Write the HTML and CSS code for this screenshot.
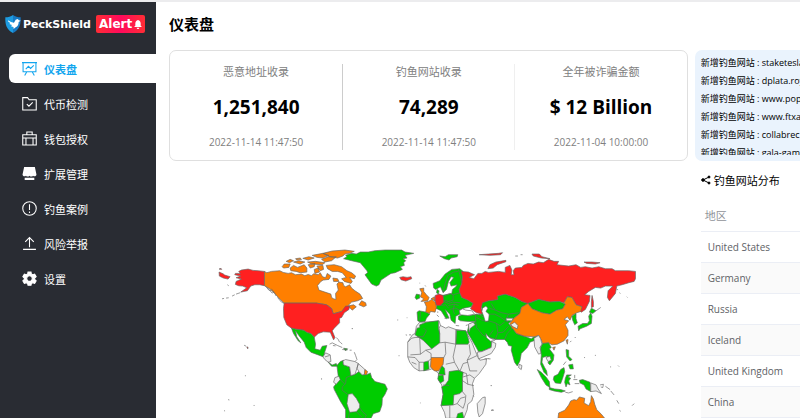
FILE: index.html
```html
<!DOCTYPE html>
<html lang="zh-CN">
<head>
    <meta charset="UTF-8">
    <meta name="viewport" content="width=device-width, initial-scale=1.0">
    <title>PeckShield Alert</title>
    <link rel="stylesheet" href="styles.css">
</head>
<body>
    <div class="app">
        <aside class="sidebar">
            <div class="logo">
                <svg class="logo-shield" viewBox="0 0 48 54">
                    <path fill="#1d9be0" d="M24 0C18 5 9 7 1 7c-1 22 4 38 23 47z"/>
                    <path fill="#1779c4" d="M24 0c6 5 15 7 23 7 1 22-4 38-23 47z"/>
                    <path fill="#fff" d="M9 16l9 5 9 2 5-9 6-2 4 4 5 1-6 4c0 8-3 13-9 16l-6 5-1-6-7-2 3-4-8-3 3-3-6-4z"/>
                </svg>
                <span class="logo-name">PeckShield</span>
                <span class="logo-badge">Alert
                    <svg viewBox="0 0 24 27"><path fill="#fff" d="M12 0c5 1 8 5 8 10v7l4 4H0l4-4v-7c0-5 3-9 8-10zM8 23h8c0 5-8 5-8 0z"/></svg>
                </span>
            </div>
            <nav class="menu">
                <a href="#" class="menu-item active">
                    <svg viewBox="0 0 14 14"><path d="M0 1.500h14M1 1.500v8.500h12V1.500M4.500 10l-2 3.500M9.500 10l2 3.500M3.500 7.500l2.500-2.500 2 2 3-3"/></svg>
                    仪表盘
                </a>
                <a href="#" class="menu-item">
                    <svg viewBox="0 0 14 14"><path d="M.7 1.500h4.500l1.500 2h6.600v9.500H.7zM4.500 7.500l2 2 3.500-3.500"/></svg>
                    代币检测
                </a>
                <a href="#" class="menu-item">
                    <svg viewBox="0 0 14 14"><path d="M.7 3.500h12.600v9.500H.7zM4.500 3.500v-2.500h5v2.500M.7 6.500h12.600M3.700 6.500v6M10.300 6.500v6"/></svg>
                    钱包授权
                </a>
                <a href="#" class="menu-item">
                    <svg viewBox="0 0 14 14"><path class="solid" d="M2 1h10l1.500 7c0 2-2.500 2-3.200 1-.8 1.200-2.500 1.200-3.300 0-.8 1.200-2.500 1.200-3.300 0-.7 1-3.200 1-3.200-1zM2.500 11h9v2h-9z"/></svg>
                    扩展管理
                </a>
                <a href="#" class="menu-item">
                    <svg viewBox="0 0 14 14"><circle cx="7" cy="7" r="6.300"/><path d="M7 3v5.500M7 9.800v1.400"/></svg>
                    钓鱼案例
                </a>
                <a href="#" class="menu-item">
                    <svg viewBox="0 0 14 14"><path d="M1 12.500h12M7 10.500V1.500M3 5.500l4-4 4 4"/></svg>
                    风险举报
                </a>
                <a href="#" class="menu-item">
                    <svg viewBox="0 0 14 14"><path class="gear" d="M5.300 2.800L5.600.9h2.800l.3 1.900 1.300.7 1.800-.6 1.400 2.400-1.400 1.300v1.300l1.400 1.300-1.400 2.400-1.800-.6-1.300.7-.3 1.500H5.600l-.3-1.500-1.300-.7-1.800.6L.8 9.200l1.400-1.300V6.600L.8 5.300l1.400-2.400 1.800.6zM7 4.500a2.600 2.600 0 1 0 0 5.200 2.600 2.600 0 1 0 0-5.200z"/></svg>
                    设置
                </a>
            </nav>
        </aside>

        <main class="content">
            <h1 class="page-title">仪表盘</h1>
            <div class="board">
                <div class="board-main">
                    <section class="stats">
                        <div class="stat">
                            <div class="stat-label">恶意地址收录</div>
                            <div class="stat-value">1,251,840</div>
                            <div class="stat-time">2022-11-14 11:47:50</div>
                        </div>
                        <div class="stat">
                            <div class="stat-label">钓鱼网站收录</div>
                            <div class="stat-value">74,289</div>
                            <div class="stat-time">2022-11-14 11:47:50</div>
                        </div>
                        <div class="stat">
                            <div class="stat-label">全年被诈骗金额</div>
                            <div class="stat-value">$ 12 Billion</div>
                            <div class="stat-time">2022-11-04 10:00:00</div>
                        </div>
                    </section>

                    <svg class="map" viewBox="0 0 1320 534">
                        <!-- Americas -->
                        <g>
                            <path class="high" d="M169 94L150 92 135 91 120 87 100 90 92 94 97 100 82 100 80 104 98 108 84 113 100 117 84 124 82 133 92 137 104 138 116 143 98 156 118 152 128 138 140 134 155 134 169 137Z"/>
                            <path class="high" d="M33 96L45 101 50 105 66 110 60 117 46 114 34 108ZM33 87l6-2 2 3zM116 320l4 1-1 5z"/>
                            <path class="mid" d="M169 94L176 98 190 94 215 92 225 97 240 100 250 98 262 104 280 102 290 107 300 103 310 107 316 101 330 104 336 98 343 110 352 113 357 100 368 108 362 118 345 120 338 124 328 136 332 150 350 156 368 162 370 172 376 176 383 178 382 160 390 150 386 132 392 126 404 128 406 136 412 140 424 134 430 144 440 152 455 162 463 175 448 182 430 186 418 198 436 194 444 200 432 210 422 200 400 214 375 221 370 205 355 194 325 189 228 189 214 176 200 160 185 146 169 137Z"/>
                            <path class="mid" d="M222 80L228 72 246 72 242 82 226 84ZM246 84L256 76 268 82 288 74 296 84 296 96 276 98 264 94 248 92ZM234 64L246 58 256 62 244 68ZM256 66L272 62 290 66 276 72ZM262 56L276 54 280 58 266 60ZM284 55L302 50 318 54 300 60ZM300 74L320 70 318 80 306 84ZM318 88L330 84 334 96 320 100ZM298 66L322 64 350 68 342 74 310 72ZM312 46L344 40 362 46 344 54 326 52ZM340 58L360 50 384 50 370 62 350 66ZM344 40L372 33 410 30 438 34 424 40 410 42 404 48 388 54 364 50ZM326 78L344 76 346 88 336 92ZM354 76L378 74 400 80 416 92 430 98 442 108 438 116 424 112 432 124 428 130 408 124 400 116 414 112 402 98 388 94 372 94 358 86ZM374 114L388 116 392 124 376 124ZM452 194L460 182 472 188 474 196 466 200Z"/>
                            <path class="coast" d="M42 176l6-1M54 174l8-1M72 168l8-4M84 162l12-4M58 134l4 3M172 138l10 12 8 2M178 143l14 16 6-4M190 146l10 14 4 8M208 172l12 14 8 4M108 315l6 3M112 405v3M340 414v4M432 264v3M138 494v3M60 478l4 1M48 511l3 1"/>
                            <path class="high" d="M228 189L325 189 355 194 370 205 375 221 400 214 412 198 424 198 422 208 408 218 400 232 394 234 394 248 378 264 372 272 380 292 376 299 366 276 345 275 330 280 318 291 308 280 298 278 286 270 262 267 250 264 236 254 227 232 226 205Z"/>
                            <path class="low" d="M250 264L262 267 286 270 298 278 308 280 318 291 322 312 320 326 336 330 342 318 356 316 350 334 346 350 330 344 308 336 294 322 288 306 272 286 262 272 266 290 278 308 270 302 256 280Z"/>
                            <path class="none" d="M344 350L352 338 366 344 368 364 360 366 350 358ZM350 350l14-4"/>
                            <path class="low" d="M360 366L372 374 384 370 388 378 370 378ZM406 324L418 326 412 332Z"/>
                            <path class="coast" d="M364 312l8-4 16 8 14 6M374 316l8 1M402 328l16 1M384 292l6 6 4 8M396 306l6 6M424 330h6M438 336l4 10 4 12-6 6"/>
                            <path class="low" d="M386 376L396 364 406 360 404 372 424 380 428 406 440 402 452 394 462 404 478 402 486 398 490 412 500 424 530 432 537 446 530 462 522 474 521 494 514 514 495 520 488 534 412 534 412 508 396 482 378 448 376 440 384 430 390 408Z"/>
                            <path class="none" d="M404 362L412 358 440 364 450 370 446 384 440 402 428 406 424 380 406 374ZM450 370L470 388 470 402 462 404 452 394 446 384ZM380 412L392 408 396 418 384 432 376 426ZM420 462L432 460 444 474 454 492 454 502 444 514 424 516 416 490Z"/>
                            <path class="mid" d="M470 388L478 394 474 404 468 402Z"/>
                            <path class="line" d="M428 406L414 412 412 430 402 440 402 450 418 462M396 418L410 432M454 502L464 516 474 524 470 534M444 514L460 530M424 516L420 534"/>
                            <path class="low" d="M406 56L416 50 412 46 430 40 444 42 456 36 480 36 500 32 530 30 580 30 590 36 616 40 590 46 596 54 584 56 592 62 586 68 588 76 576 80 582 88 560 98 548 100 536 108 518 120 512 134 504 138 490 132 480 118 470 104 478 98 476 92 466 80 456 68 430 62Z"/>
                        </g>

                        <!-- Europe and Africa -->
                        <g transform="translate(420)">
                            <path class="high" d="M154 112L164 110 176 112 188 110 190 116 172 123 158 119Z"/>
                            <path class="low" d="M274 48L290 50 300 44 328 44 326 50 308 54 302 60 288 56Z"/>
                            <path class="low" d="M256 144L254 130 274 122 290 102 310 88 334 86 344 94 340 130 332 148 334 158 340 172 358 180 374 190 368 200 346 204 334 210 334 222 322 228 320 250 308 240 304 222 290 208 302 234 292 234 278 212 262 204 266 196 262 182 274 168 290 164 310 160 312 148 322 140 326 134 308 138 304 128 316 112 308 110 300 124 294 148 284 158 276 140 262 148Z"/>
                            <path class="low" d="M264 158L266 148 272 152 270 162ZM200 172L204 162 214 164 214 174 204 178ZM206 216L212 212 234 216 244 222 234 234 230 244 216 246 208 242Z"/>
                            <path class="mid" d="M214 146L226 144 226 154 234 164 242 172 238 182 218 184 226 176 216 170 220 158ZM228 186L240 184 250 178 262 188 264 202 260 216 246 214 244 220 232 216 234 200ZM248 176L258 170 260 182Z"/>
                            <path class="high" d="M260 166L272 162 284 166 286 186 276 196 264 196 260 182Z"/>
                            <path class="line" d="M284 156L290 130 298 106 316 96 328 94M330 88L334 104 340 130M286 168L304 160 314 164 314 180 300 184 286 180M286 184L300 190 312 186 334 188M300 196L318 192 330 196M304 208L320 204 334 210M314 164L334 158M318 192L314 210 318 222M276 196L292 194 300 204M216 216L214 242"/>
                            <path class="coast" d="M265 224l6 6M268 214v4M288 234l8 2M322 256l10 1M352 256l6-2M230 136l2 3M214 128v2M172 284l4 1M182 284h6M148 238v3M152 345v3M216 487v2M176 232v2M12 264v2"/>
                            <path class="none" d="M214 246L240 246 272 242 276 256 292 264 300 260 322 268 352 272 356 282 370 306 386 346 394 360 414 356 412 372 392 400 378 414 372 430 376 462 370 482 358 492 356 508 346 534 292 534 288 516 278 496 284 462 280 434 270 420 270 400 262 392 250 386 238 390 212 392 196 382 184 366 178 350 178 306 192 284 200 280 204 258Z"/>
                            <path class="low" d="M214 254L234 246 270 242 270 264 274 282 274 308 250 326 224 300 206 288 200 284 206 264 214 262Z"/>
                            <path class="low" d="M324 270L352 272 356 282 362 306 358 312 322 312ZM226 366L240 362 242 386 226 392ZM280 376L288 384 290 404 270 402 274 390ZM270 406L284 404 286 422 276 428 268 416ZM302 394L330 390 344 396 342 414 342 452 334 460 316 464 314 494 278 496 284 462 280 440 290 434 300 420ZM328 520L342 516 346 534 324 534Z"/>
                            <path class="mid" d="M248 352L286 352 284 372 270 392 258 392 246 380Z"/>
                            <path class="line" d="M178 306L190 294 200 292 214 292 216 342 186 344M216 342L232 330 250 326M274 308L290 306 292 340 286 352M274 282L272 264 276 256M322 268L322 312 290 306M322 312L314 350 318 366 292 372M362 312L366 342 356 360 364 392 386 392M318 366L334 394 344 370 358 366M356 360L386 346M232 330L248 340 248 352M178 350L200 352 212 366 212 392M190 366L204 372M340 420L358 432 376 436M342 396L354 400 358 432M340 452L352 466 350 486M314 494L326 490 336 474 350 470M304 496L304 534M326 490L344 504 350 486M212 366L226 366M206 288L224 290 234 272 226 264M240 362L248 356M284 434L302 436M378 414L364 404 344 410"/>
                            <path class="none" d="M386 490L402 472 410 470 410 490 402 520 392 530 388 516Z"/>
                            <path class="low" d="M330 228L344 222 362 226 386 222 392 238 386 244 360 244 336 242 330 238Z"/>
                            <path class="low" d="M362 252L378 246 384 240 392 246 402 274 420 282 430 294 428 322 400 334 390 334 380 316 366 292 356 276Z"/>
                            <path class="none" d="M360 252L374 246 380 254 366 264 362 276ZM430 304L442 310 440 322 428 340 390 356 386 336 400 334 428 322Z"/>
                            <path class="coast" d="M374 466l2 3M428 510l6-2M426 436h3M408 356l14-1"/>
                        </g>

                        <!-- Asia and Oceania -->
                        <g transform="translate(840)">
                            <path class="low" d="M-40 224L-22 222 -20 206 -22 188 0 182 28 178 26 168 50 162 80 172 100 184 118 190 98 202 94 220 74 236 60 250 70 262 84 280 108 288 128 296 136 290 146 290 140 300 124 306 116 322 98 340 94 362 86 377 78 366 68 330 70 318 60 316 56 306 48 298 20 298 0 290 -16 286 -36 262 -38 246Z"/>
                            <path class="high" d="M-82 94L-60 96 -42 104 -58 112 -44 116 -32 100 -20 100 -10 94 0 97 30 94 50 97 50 82 64 76 70 90 68 104 76 104 74 92 80 84 100 82 104 76 118 70 134 72 150 66 164 68 180 58 196 64 210 64 205 74 240 78 262 74 276 82 290 80 310 84 330 80 350 86 370 86 380 92 420 92 440 94 440 116 436 124 420 128 400 134 384 138 380 160 362 182 356 172 358 152 372 138 350 138 336 144 320 142 300 154 288 164 304 166 302 184 290 208 278 216 272 212 280 200 262 194 250 172 236 170 226 188 212 184 184 186 150 178 130 186 118 190 100 184 80 172 50 162 26 168 28 178 0 182 -18 188 -22 204 -18 222 -36 218 -54 206 -46 190 -62 180 -80 172 -86 158 -88 148 -80 130 -78 110Z"/>
                            <path class="high" d="M-2 86L4 74 22 66 52 61 52 65 26 74 14 84ZM130 42L152 42 160 50 184 56 158 54 134 48ZM286 66L310 66 334 68 320 72 294 70ZM310 166L314 184 314 200 308 202 308 184ZM-28 44L0 42 30 40 42 38 36 44 4 46Z"/>
                            <path class="none water" d="M-18 204L-8 198 -2 204 -8 214 2 222 0 242 -10 244 -14 230 -20 214Z"/>
                            <path class="water" d="M-88 212L-78 206 -68 210 -50 212 -42 222 -62 226 -84 224ZM-8 280l10 12 12 6 8-1-4 4-12 2-12-10z"/>
                            <path class="line" d="M0 222L18 222 34 230 48 240 60 246M8 190L20 210 40 218 60 222 90 218M2 204L20 210M0 242L20 248 34 256 48 246M24 250L28 278 20 298M28 278L44 276 60 258M48 298L56 280 72 262M-36 232L-20 240 0 246M0 290L14 270M60 222L54 234 74 236M84 280L108 290M-30 222L-16 230"/>
                            <path class="low" d="M118 190L130 186 150 178 184 186 212 184 230 192 222 206 204 210 184 222 160 218 130 206Z"/>
                            <path class="mid" d="M118 190L130 206 160 218 184 222 204 210 222 206 230 192 226 188 236 170 250 172 262 194 280 200 276 214 264 218 250 226 244 240 236 230 226 238 240 242 230 254 238 270 238 286 226 302 206 312 190 314 180 308 162 310 156 296 150 286 136 290 108 288 84 280 70 262 64 250 74 236 94 220 98 202ZM192 322L200 320 196 330ZM232 300L238 298 236 312Z"/>
                            <path class="none" d="M52 234L74 234 70 242 54 242ZM66 254L78 246 88 256 86 266 74 260ZM136 294L150 286 156 296 160 312 154 322 158 338 150 342 138 320ZM92 372L100 376 98 388 90 382Z"/>
                            <path class="low" d="M156 322L162 310 180 308 188 322 182 326 196 344 194 360 184 374 178 368 184 356 174 348 162 352 160 366 168 382 174 392 176 406 166 396 156 372 158 346Z"/>
                            <path class="none" d="M172 352L184 348 188 360 178 364Z"/>
                            <path class="low" d="M146 388L158 396 172 410 182 424 184 442 172 434 158 412ZM182 442L198 446 216 448 230 452 218 456 196 452 182 448ZM196 408L208 402 216 388 226 382 228 394 222 414 216 430 200 428 194 418ZM230 414L234 404 248 404 238 410 246 414 240 422 244 434 236 430 232 440 228 426ZM232 328L240 330 240 348 250 358 244 362 234 350ZM240 374L252 372 254 386 244 386ZM272 420L282 418 304 426 306 454 292 446 286 434 274 428Z"/>
                            <path class="none" d="M306 428L322 434 328 446 338 460 322 452 306 454Z"/>
                            <path class="low" d="M250 228L262 220 262 236 266 248 258 254 252 240ZM268 258L282 250 296 250 302 242 300 228 306 218 310 228 308 250 294 258 274 266 270 272ZM302 216L308 204 322 212 312 220Z"/>
                            <path class="coast" d="M322 212l14-10M384 148l4 1M392 158l3 2M414 170l2 2M258 292h3M248 302l-4 4M224 374l8-10M258 404v10M254 418h12M258 430h14M230 456l10 2 12-4M334 434l10-2-2 10-6-2M350 438l14 10M366 452l10 12M384 480l6 10M392 510l4 3M320 344v3M286 352h3M364 380h3M388 376l3 3M430 496l6-6M80 48h8M96 44h6M8 436h2M0 356h6M8 510h8"/>
                            <path class="mid" d="M208 534L210 518 228 510 240 494 246 482 256 478 264 480 272 470 288 474 286 488 300 496 306 484 308 466 314 476 318 492 324 508 338 522 348 534Z"/>
                        </g>
                    </svg>
                </div>

                <aside class="board-side">
                    <div class="ticker">
                        <ul class="ticker-list">
                            <li>新增钓鱼网站 : staketesla</li>
                            <li>新增钓鱼网站 : dplata.roy</li>
                            <li>新增钓鱼网站 : www.pop</li>
                            <li>新增钓鱼网站 : www.ftxa</li>
                            <li>新增钓鱼网站 : collabrec</li>
                            <li>新增钓鱼网站 : gala-gam</li>
                        </ul>
                    </div>
                    <h2 class="side-title">
                        <svg viewBox="0 0 10 10"><path d="M8 2L2 5l6 3"/><circle cx="8" cy="2" r="1"/><circle cx="2" cy="5" r="1.300"/><circle cx="8" cy="8" r="1"/></svg>
                        钓鱼网站分布
                    </h2>
                    <table class="regions">
                        <thead>
                            <tr><th>地区</th></tr>
                        </thead>
                        <tbody>
                            <tr><td>United States</td></tr>
                            <tr><td>Germany</td></tr>
                            <tr><td>Russia</td></tr>
                            <tr><td>Iceland</td></tr>
                            <tr><td>United Kingdom</td></tr>
                            <tr><td>China</td></tr>
                        </tbody>
                    </table>
                </aside>
            </div>
        </main>
    </div>
</body>
</html>
```
FILE: styles.css
```css
* {
    box-sizing: border-box;
}
body {
    margin: 0;
    font-family: "Open Sans", "Noto Sans CJK SC", sans-serif;
    font-size: 10px;
    color: #000;
    background-color: #fff;
}
.app {
    display: flex;
    height: 100vh;
    border-top: 2px solid #ececee;
    overflow: hidden;
}

/* Sidebar */
.sidebar {
    flex: none;
    width: 156px;
    background-color: #292c33;
}
.logo {
    display: flex;
    align-items: center;
    height: 44px;
    padding-left: 5px;
    font-family: "DejaVu Sans", sans-serif;
    font-weight: bold;
    color: #fff;
}
.logo-shield {
    width: 16px;
    height: 18px;
    margin-right: 2px;
}
.logo-name {
    font-size: 11px;
}
.logo-badge {
    display: flex;
    align-items: center;
    gap: 2px;
    height: 18px;
    margin-left: 5px;
    padding: 0 3px;
    border-radius: 2px;
    background: linear-gradient(90deg, #ff2d35, #ff0a5c 50%, #ff2d35);
    font-size: 12px;
}
.logo-badge svg {
    width: 8px;
    height: 9px;
}
.menu {
    display: flex;
    flex-direction: column;
    gap: 6px;
    margin-top: 8px;
    padding-left: 9px;
}
.menu-item {
    display: flex;
    align-items: center;
    gap: 7px;
    height: 29px;
    padding-left: 13px;
    border-radius: 6px 0 0 6px;
    font-size: 11px;
    color: #fff;
    text-decoration: none;
}
.menu-item svg {
    width: 15px;
    height: 15px;
    fill: none;
    stroke: currentColor;
    stroke-width: 1;
}
.menu-item .solid {
    fill: currentColor;
    stroke: none;
}
.menu-item .gear {
    fill: currentColor;
    fill-rule: evenodd;
}
.menu-item.active {
    background-color: #fff;
    color: #12a5ee;
    font-weight: bold;
}

/* Content */
.content {
    flex: 1;
    min-width: 0;
    padding-left: 13px;
}
.page-title {
    margin: 0;
    height: 48px;
    font-size: 15px;
    line-height: 44px;
}
.board {
    display: grid;
    grid-template-columns: minmax(0, 64fr) minmax(0, 13fr);
    gap: 7px;
}
.stats {
    display: grid;
    grid-template-columns: repeat(3, 1fr);
    height: 111px;
    padding: 13px 0;
    border: 1px solid #dfdfdf;
    border-radius: 7px;
    text-align: center;
}
.stat + .stat {
    border-left: 1px solid #ccc;
}
.stat:last-child {
    border-left-color: #efefef;
}
.stat-label,
.stat-time {
    line-height: 16px;
    color: #808080;
}
.stat-label {
    font-size: 11px;
}
.stat-value {
    margin: 13px 0;
    font-size: 19px;
    font-weight: bold;
    line-height: 28px;
}
.map {
    display: block;
    width: 85%;
    margin: 79px auto 0;
    stroke: #666;
    stroke-width: 2;
    stroke-linejoin: round;
}
.high {
    fill: #ff2020;
}
.mid {
    fill: #ff7f00;
}
.low {
    fill: #00cc00;
}
.none {
    fill: #ececec;
}
.water {
    fill: #fff;
}
.line,
.coast {
    fill: none;
}

/* Right column */
.ticker {
    height: 111px;
    padding: 4px 0 6px 6px;
    border-radius: 7px 0 0 7px;
    background-color: #eaf3fd;
}
.ticker-list {
    height: 100%;
    margin: 0;
    padding: 0;
    overflow: hidden;
    list-style: none;
    font-size: 9px;
    line-height: 18px;
    white-space: nowrap;
}
.side-title {
    display: flex;
    align-items: center;
    gap: 3px;
    height: 38px;
    margin: 0;
    padding-left: 6px;
    font-size: 11px;
    font-weight: normal;
    white-space: nowrap;
}
.side-title svg {
    width: 10px;
    height: 10px;
    stroke: #000;
}
.side-title path {
    fill: none;
}
.regions {
    width: calc(100% - 6px);
    margin-left: 6px;
    border-collapse: collapse;
}
.regions th,
.regions td {
    height: 31px;
    padding: 0 0 0 7px;
    border-bottom: 1px solid #ebeef5;
    font-weight: normal;
    text-align: left;
    color: #606266;
    white-space: nowrap;
}
.regions th {
    height: 32px;
    padding-left: 4px;
    font-size: 11px;
    color: #909399;
}
.regions tbody tr:nth-child(even) {
    background-color: #fafafa;
}
```
